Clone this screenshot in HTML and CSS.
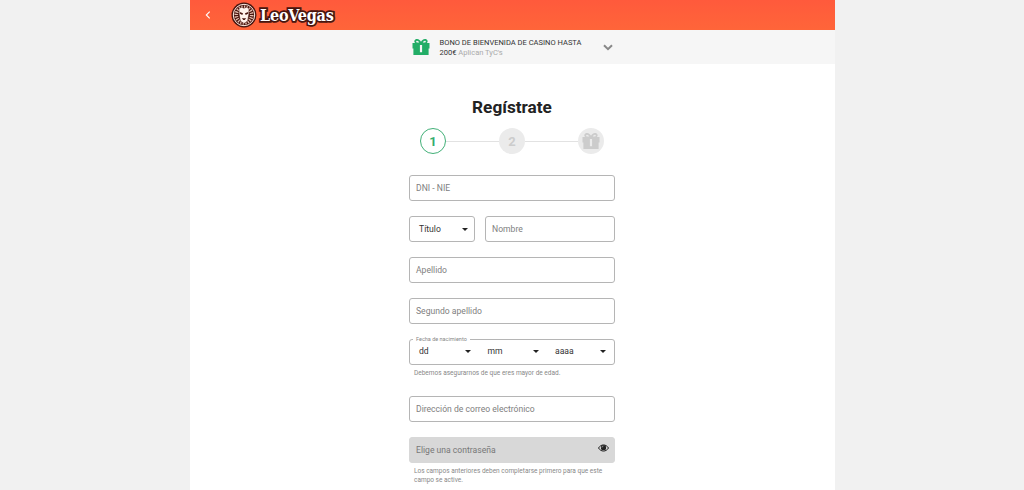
FILE: index.html
```
<!DOCTYPE html>
<html lang="es">
<head>
  <meta charset="UTF-8">
  <title>LeoVegas - Regístrate</title>
  <link rel="stylesheet" href="styles.css">
</head>
<body>

  <!-- Shared icons -->
  <svg class="defs" width="0" height="0">
    <symbol id="gift" viewBox="0 0 18 16">
      <path fill-rule="evenodd" d="M0.5 4H3.2C1.5 2.8 2.4 0 5 0C7 0 8.3 1.5 9 2.8C9.7 1.5 11 0 13 0C15.6 0 16.5 2.8 14.8 4H17.5V9.5H16.6V16H1.4V9.5H0.5ZM5 1.7C3.9 1.7 3.9 3.4 5 3.4H7.2C6.7 2.5 6 1.7 5 1.7ZM13 1.7C12 1.7 11.3 2.5 10.8 3.4H13C14.1 3.4 14.1 1.7 13 1.7ZM7.9 6V13.3H10.1V6Z"/>
    </symbol>
    <symbol id="caret" viewBox="0 0 6 3">
      <path d="M0 0H6L3 3Z"/>
    </symbol>
  </svg>

  <div class="page">
    <header class="header">
      <svg class="back" viewBox="0 0 6 8"><path d="M4.7 0.6L1.3 4L4.7 7.4"/></svg>
      <svg class="lion" viewBox="0 0 26 28">
        <circle cx="13" cy="14" r="12.5" fill="#48150f"/>
        <circle cx="13" cy="14" r="10.7" fill="none" stroke="#fff0e8" stroke-width="1"/>
        <circle cx="13" cy="14" r="7.7" fill="none" stroke="#e5bfb2" stroke-width="3.6" stroke-dasharray="1.2 1.2"/>
        <path d="M8 7.5L10.5 6.2L13 7.2L15.5 6.2L18 7.5L17.8 13.5L16.6 20L13 22.5L9.4 20L8.2 13.5Z" fill="#fff3ed" stroke="#48150f" stroke-width=".5"/>
        <path d="M8.8 11L12 12.3L11.3 14L9 12.7ZM17.2 11L14 12.3L14.7 14L17 12.7ZM10.8 17.2H15.2L13.7 19H12.3Z" fill="#48150f"/>
      </svg>
      <div class="wordmark">LeoVegas
        <svg class="paw" viewBox="0 0 6 6"><path d="M3 0.4L4 2.1L5.8 2.3L4.6 3.6L5 5.4L3 4.6L1.2 5.4L1.5 3.6L0.2 2.3L2 2.1Z"/></svg>
      </div>
    </header>

    <div class="promo">
      <svg class="promo-gift"><use href="#gift"/></svg>
      <p>BONO DE BIENVENIDA DE CASINO HASTA<br>200€ <span>Aplican TyC's</span></p>
      <svg class="promo-arrow" viewBox="0 0 10 7"><path d="M1 1.2L5 5.2L9 1.2"/></svg>
    </div>

    <main class="register">
      <h1>Regístrate</h1>

      <div class="steps">
        <span class="step active">1</span>
        <span class="line"></span>
        <span class="step">2</span>
        <span class="line"></span>
        <span class="step"><svg class="step-gift"><use href="#gift"/></svg></span>
      </div>

      <form>
        <div class="field">DNI - NIE</div>

        <div class="row">
          <div class="field select title">Título <svg class="caret"><use href="#caret"/></svg></div>
          <div class="field name">Nombre</div>
        </div>

        <div class="field">Apellido</div>
        <div class="field">Segundo apellido</div>

        <div class="group birth">
          <fieldset class="date">
            <legend>Fecha de nacimiento</legend>
            <div class="select">dd <svg class="caret"><use href="#caret"/></svg></div>
            <div class="select">mm <svg class="caret"><use href="#caret"/></svg></div>
            <div class="select">aaaa <svg class="caret"><use href="#caret"/></svg></div>
          </fieldset>
          <p class="hint">Debemos asegurarnos de que eres mayor de edad.</p>
        </div>

        <div class="field">Dirección de correo electrónico</div>

        <div class="group">
          <div class="field disabled">Elige una contraseña
            <svg class="eye" viewBox="0 0 11 8">
              <path d="M0.5 4C3 -0.1 8 -0.1 10.5 4C8 8.1 3 8.1 0.5 4Z" fill="none" stroke="#222"/>
              <circle cx="5.5" cy="3.7" r="2.6" fill="#222"/>
              <path d="M4 3.5Q4.2 2.2 5.4 2.1" fill="none" stroke="#d8d8d8" stroke-width=".6"/>
            </svg>
          </div>
          <p class="hint">Los campos anteriores deben completarse primero para que este campo se active.</p>
        </div>
      </form>
    </main>
  </div>

</body>
</html>
```
FILE: styles.css
```
* {
  box-sizing: border-box;
}

body {
  margin: 0;
  height: 490px;
  overflow: hidden;
  background: #f1f1f1;
  color: #333;
  font-family: Roboto, sans-serif;
}

h1, p {
  margin: 0;
}

svg {
  display: block;
  flex: none;
}

.defs {
  position: absolute;
}

.page {
  width: 645px;
  height: 490px;
  margin-left: 190px;
  background: #fff;
}

.header {
  display: flex;
  align-items: center;
  height: 30px;
  padding-left: 15px;
  background: linear-gradient(#ff5a3c, #ff6539);
}

.back {
  width: 6px;
  height: 8px;
  fill: none;
  stroke: #fff;
  stroke-width: 1.1;
}

.lion {
  width: 26px;
  height: 28px;
  margin-left: 20px;
}

.wordmark {
  position: relative;
  margin-left: 3px;
  padding-top: 2px;
  color: #fff;
  font-family: "DejaVu Serif Condensed", "DejaVu Serif", serif;
  font-size: 16px;
  font-stretch: condensed;
  font-weight: bold;
  letter-spacing: -0.2px;
  line-height: 22px;
  white-space: nowrap;
  -webkit-text-stroke: 3.5px #48150f;
  paint-order: stroke fill;
}

/* sits inside the "o" */
.paw {
  position: absolute;
  left: 21.5px;
  top: 12px;
  width: 4px;
  height: 4px;
  fill: #48150f;
}

.promo {
  display: flex;
  align-items: center;
  height: 34px;
  padding-left: 222px;
  background: #f6f6f6;
}

.promo-gift {
  width: 18px;
  height: 16px;
  fill: #22ad66;
}

.promo p {
  width: 154px;
  margin-left: 9.5px;
  padding-top: 1px;
  font-size: 7.55px;
  line-height: 10px;
  white-space: nowrap;
}

.promo span {
  color: #aaa;
}

.promo-arrow {
  width: 10px;
  height: 7px;
  margin-left: 9px;
  fill: none;
  stroke: #888;
  stroke-width: 2;
}

.register {
  width: 206px;
  margin-left: 219px;
  padding-top: 32px;
}

h1 {
  color: #222;
  font-size: 17.2px;
  line-height: 22px;
  text-align: center;
}

.steps {
  display: flex;
  align-items: center;
  margin: 10px 11px 21px;
}

.step {
  display: flex;
  align-items: center;
  justify-content: center;
  width: 26px;
  height: 26px;
  border-radius: 50%;
  background: #ebebeb;
  color: #ccc;
  font-size: 13px;
  font-weight: bold;
}

.step.active {
  border: 1.5px solid #42b078;
  background: #fff;
  color: #35ad70;
}

.step-gift {
  width: 18px;
  height: 16px;
  fill: #ccc;
}

.line {
  flex: 1;
  height: 1px;
  background: #e2e2e2;
}

form {
  display: flex;
  flex-direction: column;
  gap: 15px;
}

.field {
  display: flex;
  align-items: center;
  height: 26px;
  padding: 0 6px;
  border: 1px solid #b5b5b5;
  border-radius: 3px;
  color: #808080;
  font-size: 8.6px;
}

.row {
  display: flex;
  gap: 10px;
}

.select {
  display: flex;
  align-items: center;
  justify-content: space-between;
  color: #333;
  font-size: 8.6px;
}

.title {
  width: 66px;
  padding: 0 6px 0 9px;
}

.name {
  flex: 1;
}

.caret {
  width: 6px;
  height: 3px;
  fill: #222;
}

.birth {
  height: 42px;
}

.date {
  display: grid;
  grid-template-columns: 52px 51px 51px;
  column-gap: 16.5px;
  height: 28px;
  margin: -2px 0 0;
  padding: 0 0 4px 9px;
  border: 1px solid #b5b5b5;
  border-radius: 3px;
}

.date legend {
  margin-left: -6px;
  padding: 0 3px;
  color: #888;
  font-size: 5.5px;
  line-height: 5px;
}

.hint {
  padding: 4px 5px 0;
  color: #888;
  font-size: 6.5px;
  line-height: 9px;
}

.disabled {
  border-color: #d8d8d8;
  background: #d8d8d8;
  color: #777;
}

.eye {
  width: 11px;
  height: 8px;
  margin: 0 -1px 4px auto;
}
```
